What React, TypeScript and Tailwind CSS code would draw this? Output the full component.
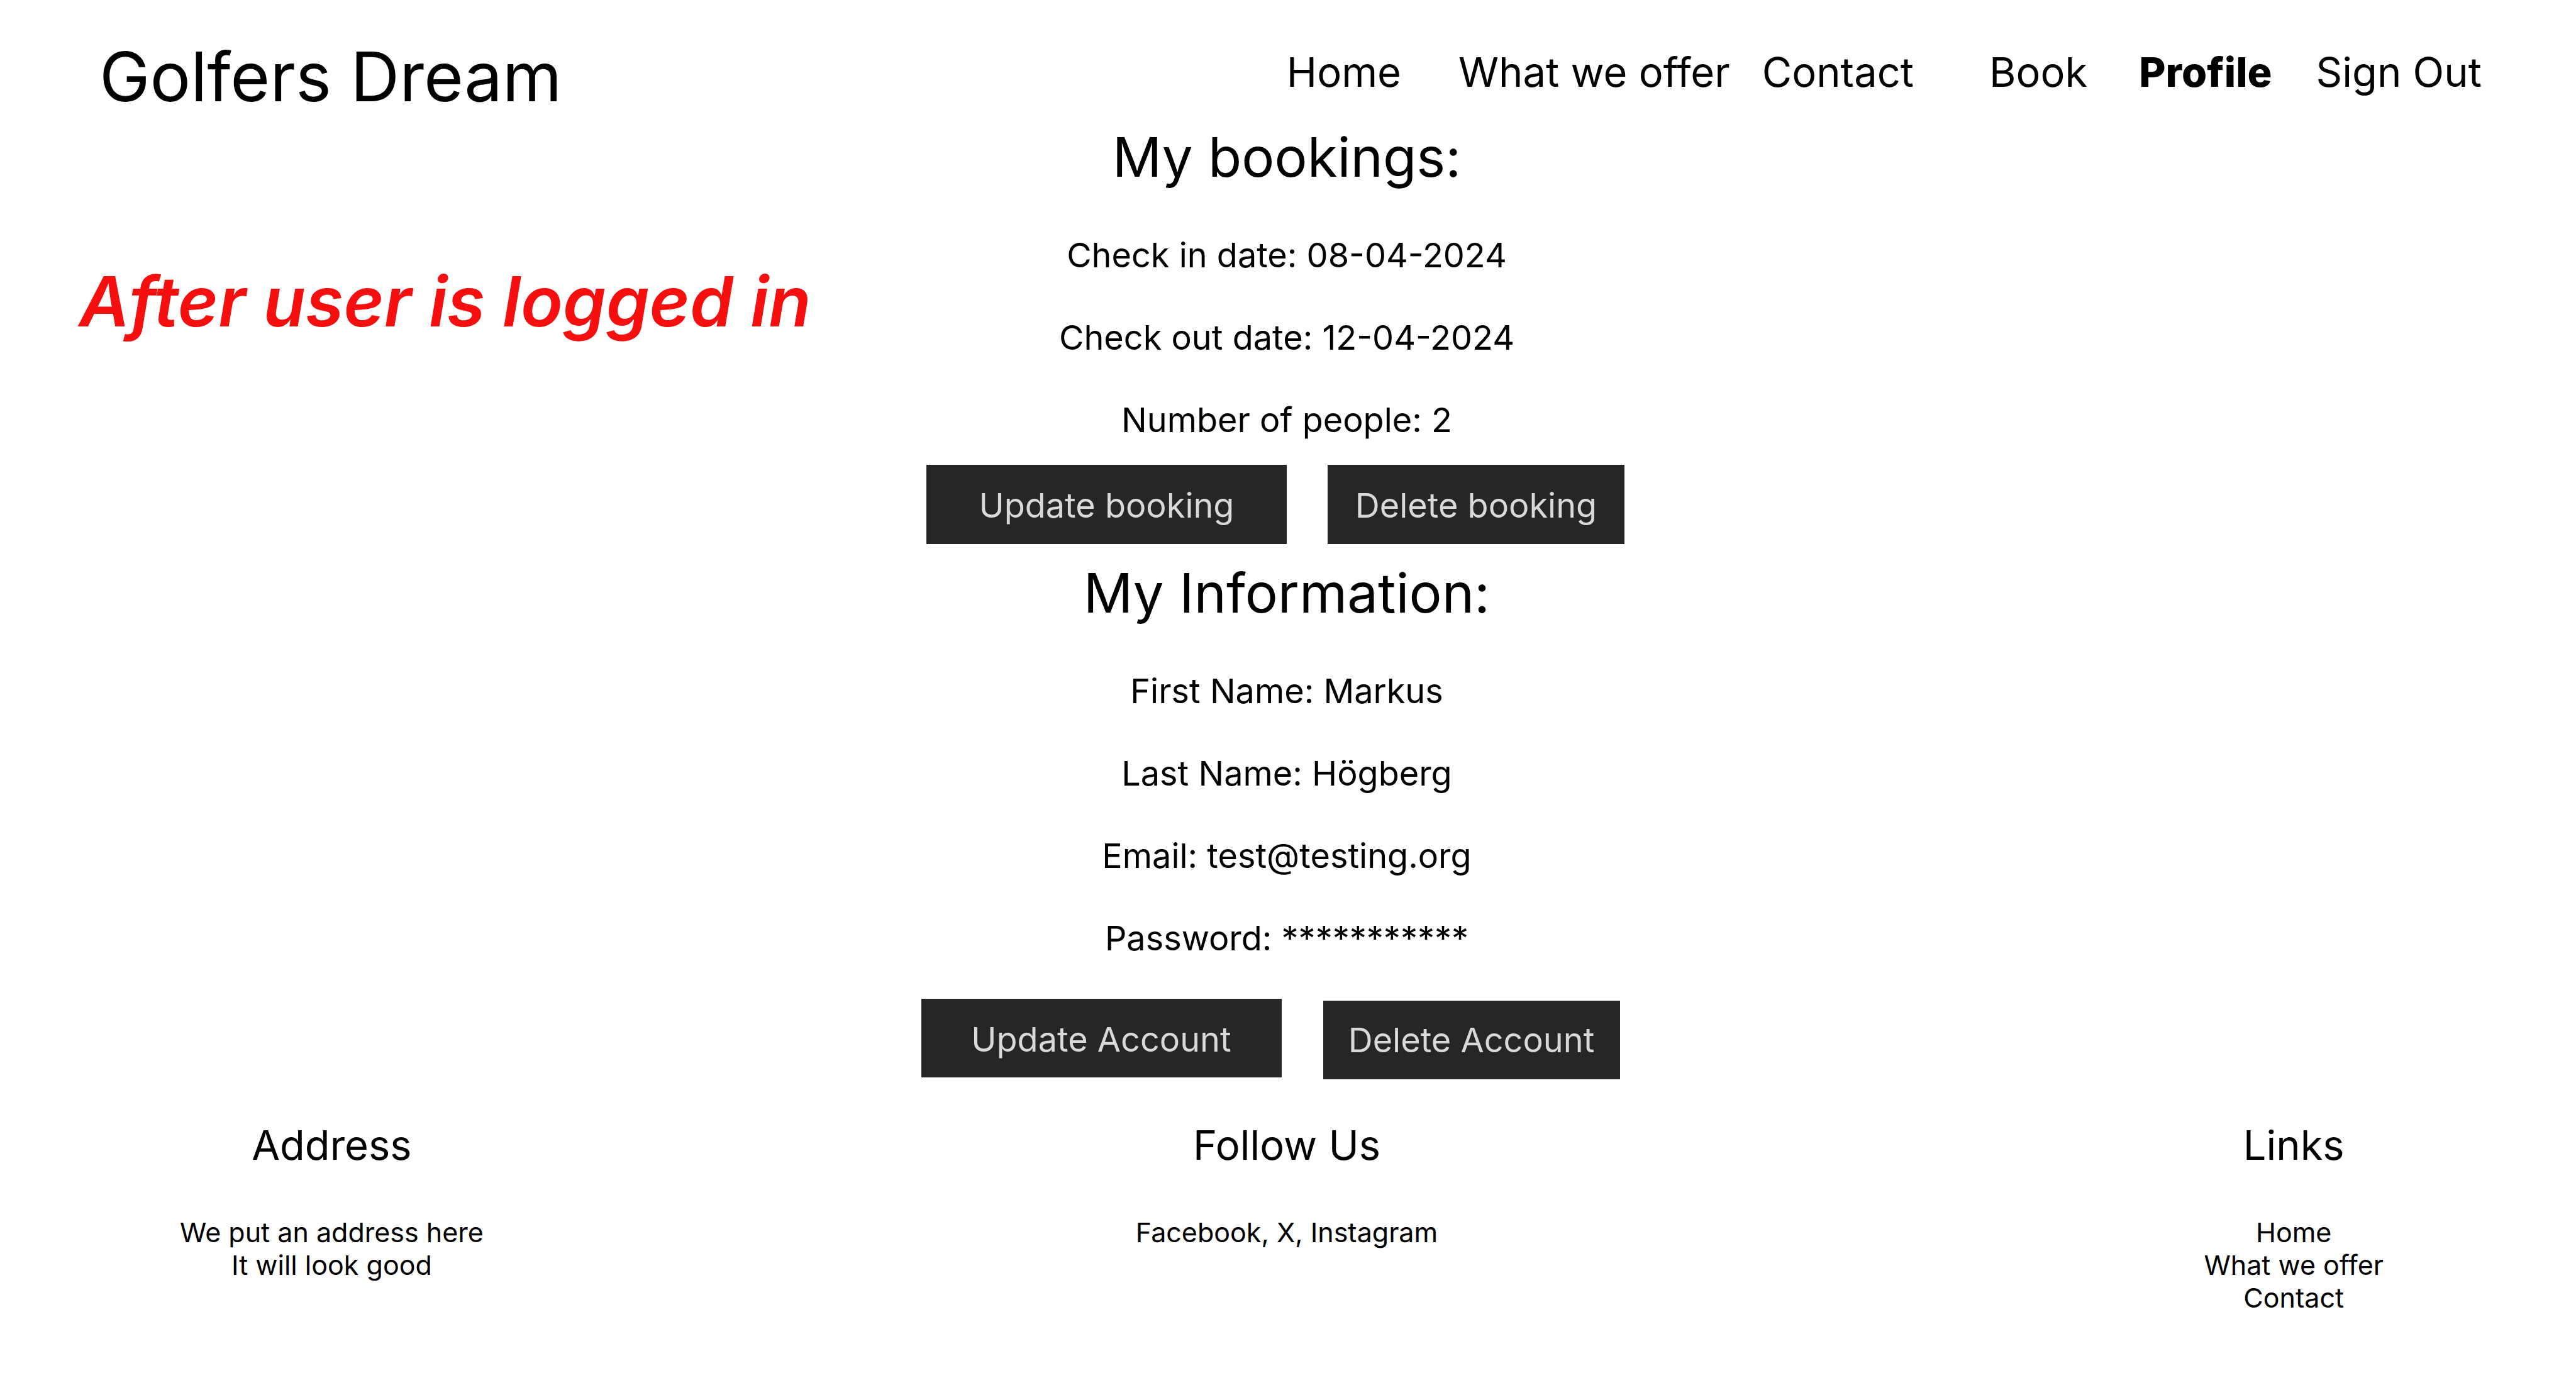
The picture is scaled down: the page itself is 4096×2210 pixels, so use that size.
const navLinks = [
  { label: "Home", className: "" },
  { label: "What we offer", className: "ml-[91px]" },
  { label: "Contact", className: "ml-[51px]" },
  { label: "Book", className: "ml-[120px]" },
  { label: "Profile", className: "ml-[82px] font-extrabold" },
  { label: "Sign Out", className: "ml-[70px]" },
];

const bookingLines = [
  "Check in date: 08-04-2024",
  "Check out date: 12-04-2024",
  "Number of people: 2",
];

const accountLines = [
  "First Name: Markus",
  "Last Name: Högberg",
  "Email: test@testing.org",
  "Password: ***********",
];

const footerLinks = ["Home", "What we offer", "Contact"];

function Details({ title, lines }: { title: string; lines: string[] }) {
  return (
    <section className="pr-1">
      <h2 className="text-[87px] leading-[104px]">{title}</h2>
      <div className="mt-[71px] flex flex-col gap-[65px] text-[54px] leading-[66px]">
        {lines.map((line) => (
          <p key={line}>{line}</p>
        ))}
      </div>
    </section>
  );
}

function ActionButton({ label, className }: { label: string; className: string }) {
  return (
    <button
      type="button"
      className={`bg-[#262626] text-center text-[54px] leading-[66px] text-[#d9d9d9] ${className}`}
    >
      {label}
    </button>
  );
}

export default function App() {
  return (
    <div className="min-h-screen bg-white font-['Inter',sans-serif] text-black">
      <header className="flex items-center justify-between pt-[57px] pr-[150px] pl-[158px]">
        <h1 className="text-[108px] leading-[130px]">Golfers Dream</h1>
        <nav className="flex pb-[14px] text-[65px] leading-[78px]">
          {navLinks.map((link) => (
            <a key={link.label} href="#" className={link.className}>
              {link.label}
            </a>
          ))}
        </nav>
      </header>

      <main className="grid grid-cols-[1fr_auto_1fr] pt-[11px]">
        <p className="pt-[216px] pl-[126px] text-[110px] leading-[130px] font-semibold whitespace-nowrap text-[#f50f0f] italic">
          After user is logged in
        </p>
        <div className="flex flex-col items-center text-center whitespace-nowrap">
          <Details title="My bookings:" lines={bookingLines} />
          <div className="mt-[38px] mb-[26px] flex gap-[65px] pr-[40px]">
            <ActionButton label="Update booking" className="h-[126px] w-[573px] pt-1" />
            <ActionButton label="Delete booking" className="h-[126px] w-[472px] pt-1" />
          </div>

          <Details title="My Information:" lines={accountLines} />
          <div className="mt-[63px] flex h-[128px] gap-[66px] pr-[56px]">
            <ActionButton label="Update Account" className="h-[125px] w-[573px] self-start pt-1" />
            <ActionButton label="Delete Account" className="h-[125px] w-[472px] self-end" />
          </div>
        </div>
      </main>

      <footer className="grid grid-cols-[1fr_auto_1fr] pt-[66px] text-center text-[43px] leading-[52px]">
        <section className="justify-self-start pl-[286px]">
          <h3 className="mb-[73px] text-[65px] leading-[78px]">Address</h3>
          <p>We put an address here</p>
          <p>It will look good</p>
        </section>
        <section className="pr-1">
          <h3 className="mb-[73px] text-[65px] leading-[78px]">Follow Us</h3>
          <p>Facebook, X, Instagram</p>
        </section>
        <section className="justify-self-end pr-[306px]">
          <h3 className="mb-[73px] text-[65px] leading-[78px]">Links</h3>
          <ul>
            {footerLinks.map((label) => (
              <li key={label}>
                <a href="#">{label}</a>
              </li>
            ))}
          </ul>
        </section>
      </footer>
    </div>
  );
}
